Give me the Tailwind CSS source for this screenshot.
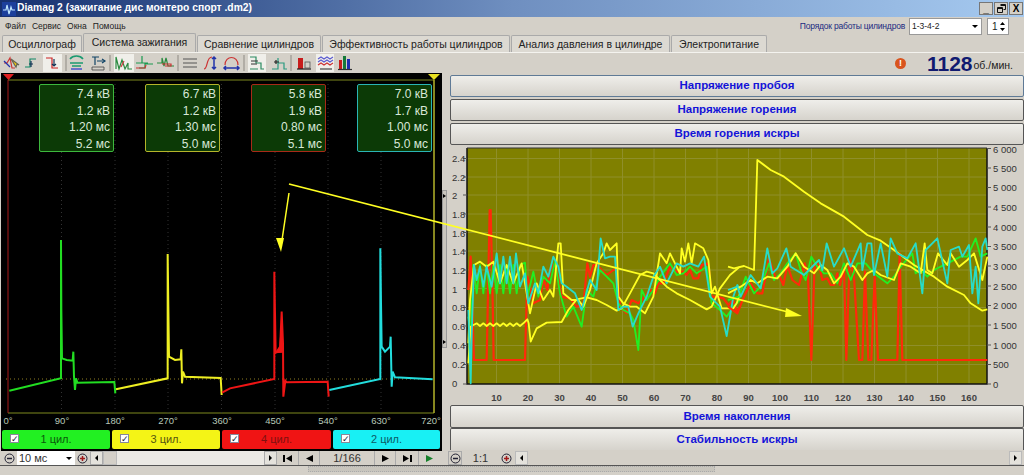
<!DOCTYPE html>
<html lang="ru">
<head>
    <meta charset="UTF-8" />
    <title>Diamag 2</title>
    <script src="https://cdn.jsdelivr.net/npm/@tailwindcss/browser@4"></script>
</head>
<body class="bg-[#d4d0c8] font-['Liberation_Sans',sans-serif] text-black">
<div class="relative w-[1024px] h-[475px] overflow-hidden flex flex-col">

    <!-- title bar -->
    <div class="h-[17px] flex items-center bg-gradient-to-r from-[#17306f] via-[#6f8fc0] to-[#a6caf0] pl-[2px] pr-[1px]">
        <svg width="14" height="14" viewBox="0 0 14 14" class="mr-[1px]"><rect width="14" height="14" fill="#1c3f9c"/><path d="M1 8h3l1-5 2 9 2-7 1 3h3" fill="none" stroke="#bfe6ff" stroke-width="1.2"/></svg>
        <span class="text-white font-bold text-[10.3px] leading-none">Diamag 2 (зажигание дис монтеро спорт .dm2)</span>
        <div class="ml-auto flex gap-[1px]">
            <div class="w-[14px] h-[13px] bg-[#d4d0c8] border border-[#777] text-[10px] font-bold leading-[11px] text-center">_</div>
            <div class="w-[14px] h-[13px] bg-[#d4d0c8] border border-[#777] flex items-center justify-center"><svg width="9" height="9" viewBox="0 0 9 9" fill="none" stroke="#111"><path d="M3.500.5h5v5h-2M3.500 1.500h5"/><path d="M.5 3.500h5v5h-5zM.5 4.500h5"/></svg></div>
            <div class="w-[14px] h-[13px] bg-[#d4d0c8] border border-[#777] text-[10px] font-bold leading-[11px] text-center">X</div>
        </div>
    </div>

    <!-- menu -->
    <div class="h-[18px] flex items-center pl-[5px] text-[8.5px] gap-[6px] text-[#222]">
        <span>Файл</span><span>Сервис</span><span>Окна</span><span>Помощь</span>
        <div class="ml-auto flex items-center pr-[15px]">
            <span class="text-[#1a2a80] text-[8.5px] mr-[4px] tracking-[-0.2px]">Порядок работы цилиндров</span>
            <div class="w-[73px] h-[17px] bg-white border border-[#999] flex items-center pl-[2px] text-[8.5px]">1-3-4-2<span class="ml-auto mr-[3px] w-0 h-0 border-x-[3px] border-x-transparent border-t-[3px] border-t-black"></span></div>
            <div class="ml-[5px] w-[22px] h-[17px] bg-white border border-[#999] flex items-center pl-[4px] text-[10px]">1<svg width="7" height="11" viewBox="0 0 7 11" class="ml-auto mr-[2px]"><path d="M3.5 1 6 4H1zM3.5 10 1 7h5z"/></svg></div>
        </div>
    </div>

    <!-- tabs -->
    <div class="h-[18px] flex items-end pl-[2px] gap-[1px] text-[10.5px] text-[#222] border-b border-[#f4f3ef] whitespace-nowrap">
        <div class="w-[80px] h-[17px] bg-[#dcd9d2] border border-b-0 border-[#aaa] rounded-t-[2px] text-center leading-[16px]">Осциллограф</div>
        <div class="w-[113px] h-[19px] bg-[#d4d0c8] border border-b-0 border-[#aaa] rounded-t-[2px] text-center leading-[17px]">Система зажигания</div>
        <div class="w-[124px] h-[17px] bg-[#dcd9d2] border border-b-0 border-[#aaa] rounded-t-[2px] text-center leading-[16px]">Сравнение цилиндров</div>
        <div class="w-[188px] h-[17px] bg-[#dcd9d2] border border-b-0 border-[#aaa] rounded-t-[2px] text-center leading-[16px]">Эффективность работы цилиндров</div>
        <div class="w-[159px] h-[17px] bg-[#dcd9d2] border border-b-0 border-[#aaa] rounded-t-[2px] text-center leading-[16px]">Анализ давления в цилиндре</div>
        <div class="w-[96px] h-[17px] bg-[#dcd9d2] border border-b-0 border-[#aaa] rounded-t-[2px] text-center leading-[16px]">Электропитание</div>
    </div>

    <!-- toolbar -->
    <div class="relative h-[20px] flex items-center">
        <svg width="360" height="20" viewBox="0 0 360 20" fill="none" stroke-width="1.2">
            <g fill="#f0efea" stroke="none"><rect x="43" y="1" width="19" height="18"/><rect x="114" y="1" width="20" height="18"/><rect x="248" y="1" width="18" height="18"/><rect x="316" y="1" width="18" height="18"/></g>
            <g stroke="#9a978f"><path d="M66 2v16M110 2v16M178 2v16M244 2v16M291 2v16"/></g>
            <path d="M4 10h3l3-5 2 10h3" stroke="#c33"/><path d="M11 6l5 8 1-3 2 1z" fill="#ffd400" stroke="#665"/><path d="M4 8l6 6" stroke="#23a"/>
            <path d="M25 14h5V6h6" stroke="#186"/><path d="M31 8v6M29 11h4" stroke="#135"/>
            <path d="M46 5h6v10h6" stroke="#c22"/><path d="M54 6v7M52 11l2 2 2-2" stroke="#135"/>
            <path d="M70 6c3-4 10-4 13 0M70 10h13M72 13h9" stroke="#1a9a70" stroke-width="1.6"/><path d="M71 16h11" stroke="#23c"/>
            <path d="M92 4h7M95 4v8M97 8h8" stroke="#146"/><path d="M102 6l3 2-3 2" stroke="#146"/><path d="M92 14h12v3H92z" stroke="#444" stroke-width=".8"/>
            <path d="M116 16V4l3 12 3-9 3 9 3-6v6h4" stroke="#2a8a40"/><path d="M121 14l3-6" stroke="#c44"/>
            <path d="M136 10h6V3v7h6M139 15h6v-4h8" stroke="#1a9a50"/><path d="M136 15h9l1-3" stroke="#c33"/>
            <path d="M157 10h5V5l2 8 2-8 2 8h6" stroke="#2a8a40"/><path d="M162 11h9v2h-6" stroke="#c33"/>
            <path d="M183 6h14M183 10h14M183 14h14" stroke="#555" stroke-width="1"/>
            <path d="M204 16c4 0 2-12 8-12" stroke="#c33"/><path d="M214 4v12M212 6l2-2 2 2M212 14l2 2 2-2" stroke="#23a" stroke-width="1.5"/>
            <path d="M225 12c0-10 13-10 13 0" stroke="#c33"/><path d="M224 15h15M226 13l-2 2 2 2M237 13l2 2-2 2" stroke="#23a" stroke-width="1.5"/>
            <path d="M250 4h6v6h5v6h3M250 16h8" stroke="#2a8a60"/><path d="M251 8h7M251 11h6" stroke="#333"/>
            <path d="M272 16h6V5M278 10h6v6h3" stroke="#2a9a80"/><path d="M274 9h5M276 7v4" stroke="#222"/>
            <rect x="298" y="5" width="5" height="11" fill="#c71c1c" stroke="none"/><path d="M297 16h14" stroke="#222"/><rect x="305" y="9" width="5" height="6" stroke="#555" stroke-width=".8"/>
            <path d="M318 6l3-2 3 2 3-2 3 2 3-2M318 9l3-2 3 2 3-2 3 2 3-2" stroke="#5a5ad0"/><path d="M318 12l3-2 3 2 3-2 3 2 3-2" stroke="#c33"/><path d="M320 16h12" stroke="#444"/>
            <rect x="339" y="7" width="3" height="9" fill="#c71c1c" stroke="none"/><rect x="343" y="3" width="3" height="13" fill="#157a3a" stroke="none"/><rect x="347" y="6" width="3" height="10" fill="#1c2fb0" stroke="none"/><path d="M338 16.500h14" stroke="#333"/>
        </svg>
        <div class="ml-auto flex items-center pr-[11px]">
            <div class="w-[11px] h-[11px] rounded-full bg-[#d9541e] text-white text-[9px] font-bold leading-[11px] text-center">!</div>
            <span class="ml-[21px] text-[#101a70] text-[21px] font-bold leading-none">1128</span>
            <span class="ml-[1px] text-[10.5px] text-[#222] mt-[5px]">об./мин.</span>
        </div>
    </div>

    <!-- main -->
    <div class="h-[378px] flex">
        <!-- scope -->
        <div class="w-[441px] ml-[1px] bg-black flex flex-col shrink-0">
            <div class="relative h-[356px]">
                <svg class="absolute inset-0" width="440" height="356" viewBox="1 73 440 356" fill="none">
                    <path d="M8 80H434M8 413H434" stroke="#7f8a1e" stroke-width="1"/>
                    <path d="M8 80V413" stroke="#a81818" stroke-width="1"/>
                    <path d="M434 80V413" stroke="#b5b52a" stroke-width="1.500"/>
                    <path d="M61.500 84V413M115 84V413M168 84V413M221.500 84V413M275 84V413M328 84V413M381 84V413" stroke="#333" stroke-width="1" stroke-dasharray="1 3"/>
                    <path d="M6 379H434" stroke="#8f7f20" stroke-width="1" stroke-dasharray="1 3"/>
                    <path d="M3 74h11l-5.500 6z" fill="#e02020"/><path d="M428 74h12l-6 6z" fill="#e8e020"/>
                    <g transform="translate(0 230) scale(.33333)">
                        <polyline stroke="#22dd22" stroke-width="6" points="28,482 183,445 183,30 184,240 186,385 200,390 218,392 220,365 222,440 225,480 228,445 232,458 343,456 346,490"/>
                        <polyline stroke="#eeee22" stroke-width="6" points="348,478 503,445 503,72 505,230 507,380 525,390 542,388 544,358 546,460 549,425 555,440 662,444 665,495"/>
                    </g>
                    <g transform="translate(230 170) scale(.33333)">
                        <polyline stroke="#ee1515" stroke-width="6" points="-24,668 0,655 133,627 133,305 135,430 137,548 150,540 155,425 159,520 160,680 166,632 170,637 293,635 296,680"/>
                        <polygon fill="#ee1515" points="134,550 148,528 155,430 160,548"/>
                        <polyline stroke="#22dddd" stroke-width="6" points="298,660 451,627 451,235 453,400 455,530 465,545 480,530 482,500 485,650 488,605 495,622 608,628"/>
                    </g>
                    <g font-size="9.500" fill="#b8c8b8" text-anchor="middle" stroke="none">
                        <text x="8" y="424">0°</text><text x="62" y="424">90°</text><text x="115" y="424">180°</text><text x="168" y="424">270°</text><text x="222" y="424">360°</text><text x="275" y="424">450°</text><text x="328" y="424">540°</text><text x="381" y="424">630°</text><text x="431" y="424">720°</text>
                    </g>
                </svg>
                <div class="relative pt-[11px] pl-[38px] flex gap-[31px] text-[#d8e8d8] text-[12px] leading-[16.500px] text-right">
                    <div class="w-[75px] h-[68px] bg-[#0c3a06] border border-[#3db83d] rounded-[2px] pr-[3px] pt-[1px]"><p>7.4 кВ</p><p>1.2 кВ</p><p>1.20 мс</p><p>5.2 мс</p></div>
                    <div class="w-[75px] h-[68px] bg-[#0c3a06] border border-[#b5b52a] rounded-[2px] pr-[3px] pt-[1px]"><p>6.7 кВ</p><p>1.2 кВ</p><p>1.30 мс</p><p>5.0 мс</p></div>
                    <div class="w-[75px] h-[68px] bg-[#0c3a06] border border-[#a82a18] rounded-[2px] pr-[3px] pt-[1px]"><p>5.8 кВ</p><p>1.9 кВ</p><p>0.80 мс</p><p>5.1 мс</p></div>
                    <div class="w-[75px] h-[68px] bg-[#0c3a06] border border-[#2ab5b5] rounded-[2px] pr-[3px] pt-[1px]"><p>7.0 кВ</p><p>1.7 кВ</p><p>1.00 мс</p><p>5.0 мс</p></div>
                </div>
            </div>
            <!-- legend -->
            <div class="h-[22px] flex gap-[2px] pl-[1px] pr-[1px] pt-[1px] text-[11px] text-center leading-[19px]">
                <div class="relative w-[108px] h-[19px] bg-[#22f022] rounded-[2px] text-[#0a5a0a]"><span class="absolute left-[8px] top-[4px] w-[9px] h-[9px] bg-white border border-[#889] text-[#123] text-[9px] leading-[8px]">✓</span>1 цил.</div>
                <div class="relative w-[108px] h-[19px] bg-[#f4f416] rounded-[2px] text-[#555510]"><span class="absolute left-[8px] top-[4px] w-[9px] h-[9px] bg-white border border-[#889] text-[#123] text-[9px] leading-[8px]">✓</span>3 цил.</div>
                <div class="relative w-[109px] h-[19px] bg-[#f01414] rounded-[2px] text-[#801010]"><span class="absolute left-[8px] top-[4px] w-[9px] h-[9px] bg-white border border-[#889] text-[#123] text-[9px] leading-[8px]">✓</span>4 цил.</div>
                <div class="relative w-[107px] h-[19px] bg-[#18f0f4] rounded-[2px] text-[#0c5a66]"><span class="absolute left-[8px] top-[4px] w-[9px] h-[9px] bg-white border border-[#889] text-[#123] text-[9px] leading-[8px]">✓</span>2 цил.</div>
            </div>
        </div>

        <!-- splitter -->
        <div class="w-[8px] shrink-0 pt-[117px]">
            <div class="w-[5px] h-[158px] bg-[#c8c5bd] border border-[#999] flex flex-col justify-between items-center py-[3px]">
                <span class="w-0 h-0 border-y-[2px] border-y-transparent border-l-[3px] border-l-black"></span>
                <span class="w-0 h-0 border-y-[2px] border-y-transparent border-l-[3px] border-l-black"></span>
            </div>
        </div>

        <!-- right column -->
        <div class="w-[574px] flex flex-col">
            <div class="h-[2px]"></div>
            <button class="h-[22px] mb-[2px] border border-[#5f7a96] rounded-[2px] bg-gradient-to-b from-[#efeeea] to-[#d6d3cc] text-[#1414d8] font-bold text-[11.500px]">Напряжение пробоя</button>
            <button class="h-[22px] mb-[2px] border border-[#555] rounded-[2px] bg-gradient-to-b from-[#efeeea] to-[#d6d3cc] text-[#1414d8] font-bold text-[11.500px]">Напряжение горения</button>
            <button class="h-[22px] border border-[#555] rounded-[2px] bg-gradient-to-b from-[#efeeea] to-[#d6d3cc] text-[#1414d8] font-bold text-[11.500px]">Время горения искры</button>
            <svg width="574" height="262" viewBox="450 143 574 262" fill="none" class="shrink-0 -mt-[2px]">
                <rect x="467" y="148" width="520" height="236" fill="#808000"/>
                <path d="M496.500 148V384M528 148V384M559.500 148V384M591 148V384M622.500 148V384M654 148V384M685.500 148V384M717 148V384M748.500 148V384M780 148V384M811.500 148V384M843 148V384M874.500 148V384M906 148V384M937.500 148V384M969 148V384" stroke="#8f8f2a" stroke-width="1"/>
                <path d="M467 364.500H987M467 345.500H987M467 326H987M467 307.500H987M467 288.500H987M467 270H987M467 251H987M467 232.500H987M467 214H987M467 195H987M467 177H987M467 158.500H987" stroke="#8f8f2a" stroke-width="1"/>
                <path d="M467 148V384H987V148" stroke="#111" stroke-width="1.500"/><path d="M467 148H987" stroke="#333" stroke-width="1"/>
                <g transform="translate(450 150) scale(.33333)" stroke-width="5.500" stroke-linejoin="round">
                    <polyline stroke="#ff2a0a" stroke-width="6.500" points="55,420 62,320 72,630 110,630 113,480 119,180 122,180 128,450 131,630 225,630 232,380 238,400 250,460 270,450 280,385 292,420 300,360 315,340 335,440 360,445 380,470 400,465 412,340 420,380 430,345 440,345 450,355 470,375 490,360 500,360 510,470 530,490 545,450 565,460 580,445 600,420 615,430 625,400 640,400 660,350 680,365 700,365 710,375 720,360 730,385 745,385 755,345 775,340 785,440 800,440 820,445 835,465 850,450 860,485 870,470"/>
                    <polyline stroke="#22ee22" points="55,500 62,560 70,345 80,430 90,345 100,430 110,345 120,430 130,345 140,430 150,345 160,430 170,345 180,430 190,345 200,430 210,345 225,338 232,440 250,365 265,440 280,380 300,400 315,335 330,430 350,500 370,470 395,530 410,420 430,440 450,360 470,380 490,400 505,460 520,480 540,490 550,510 565,600 575,420 590,450 610,420 630,380 660,340 680,375 700,370 720,350 740,370 770,350 785,460 810,480 830,500 850,470 870,450"/>
                    <polyline stroke="#ffff22" points="55,580 60,450 72,345 90,335 110,350 130,335 150,400 170,345 190,400 215,340 225,400 240,490 260,400 280,450 300,420 310,440 325,280 332,280 340,430 365,450 385,450 400,470 420,420 440,340 460,310 470,280 480,300 500,280 505,440 520,460 540,470 560,470 585,490 610,440 630,310 650,340 660,310 690,370 695,295 705,335 715,280 725,340 735,280 760,295 775,330 785,430 795,410 815,475 850,475 860,460 870,430"/>
                    <polyline stroke="#ffff22" points="55,640 62,530 70,525 80,520 90,528 100,520 110,528 120,520 130,528 140,520 150,528 160,520 170,528 180,520 190,528 200,520 210,528 220,520 232,508 236,520 242,575 260,535 290,518 335,516 355,480 380,448 410,442 440,450 470,465 500,482 515,475 540,430 570,375 590,365 610,370 650,410 680,430 720,450 770,478 785,470 810,415 840,375 870,350"/>
                    <polyline stroke="#28dcc8" points="55,480 62,700 65,560 72,345 80,390 90,350 100,410 110,350 125,410 140,310 150,400 160,320 170,400 180,320 190,400 198,310 210,410 225,370 235,460 255,400 265,430 280,350 295,380 310,320 325,350 335,400 350,410 375,430 395,480 420,390 440,420 452,265 465,325 480,320 495,320 505,480 520,470 535,470 548,530 565,490 590,440 610,380 630,350 650,400 680,340 700,350 720,340 745,350 762,320 780,440 810,470 830,558 850,440 862,405 870,420"/>
                </g>
                <g transform="translate(734 150) scale(.33333)" stroke-width="5.500" stroke-linejoin="round">
                    <polyline stroke="#ff2a0a" stroke-width="6.500" points="-18,470 10,490 30,440 50,400 70,430 85,430 105,325 125,385 135,375 148,405 160,345 175,390 195,405 212,340 222,380 232,630 242,340 255,345 265,390 280,385 290,405 300,405 310,370 318,405 330,350 337,630 347,325 360,380 375,630 385,630 393,365 403,630 412,630 422,380 432,630 490,630 497,310 505,630 760,630"/>
                    <polyline stroke="#22ee22" points="-18,450 15,440 35,380 60,430 80,410 105,340 120,390 140,370 160,340 185,310 200,360 215,390 232,320 250,350 270,370 290,370 310,400 330,340 350,390 370,340 395,340 420,370 460,400 480,380 500,350 535,310 545,370 560,360 580,380 600,360 620,350 640,340 680,320 700,320 725,265 740,320 760,310"/>
                    <polyline stroke="#ffff22" points="-18,430 20,410 50,390 70,400 100,380 130,385 160,350 185,310 210,350 240,370 260,345 280,360 300,400 320,380 340,340 360,350 385,390 400,370 420,360 440,375 480,390 500,340 530,350 560,370 572,280 580,360 595,370 612,310 640,345 650,310 675,350 700,330 720,310 745,390 760,320"/>
                    <polyline stroke="#ffff22" points="-18,350 0,355 30,348 60,360 65,200 70,30 110,60 150,80 210,125 260,160 330,200 400,255 440,272 480,300 540,345 600,380 640,410 690,435 710,460 745,482 760,478"/>
                    <polyline stroke="#28dcc8" points="-18,420 10,410 20,440 50,375 80,415 100,295 115,370 130,355 157,295 170,350 210,375 255,330 265,360 278,280 300,350 330,295 350,350 380,280 385,360 400,280 412,280 420,375 440,280 460,380 470,265 490,310 520,325 545,280 565,430 575,300 610,265 640,400 650,300 675,290 685,320 705,285 715,430 725,350 733,460 745,290 755,265 760,300"/>
                </g>
                <path d="M463 158.500h4M463 177h4M463 195h4M463 214h4M463 232.500h4M463 251h4M463 270h4M463 288.500h4M463 307.500h4M463 326h4M463 345.500h4M463 364.500h4M463 384h4" stroke="#555" stroke-width="1"/>
                <path d="M987 148.500h4M987 168h4M987 187.500h4M987 207h4M987 227h4M987 246.500h4M987 266h4M987 286h4M987 305.500h4M987 325h4M987 345h4M987 364.500h4M987 384h4" stroke="#555" stroke-width="1"/>
                <g font-size="9.500" fill="#333" stroke="none">
                    <text x="452" y="162">2.4</text><text x="452" y="181">2.2</text><text x="452" y="199">2</text><text x="452" y="218">1.8</text><text x="452" y="237">1.6</text><text x="452" y="255">1.4</text><text x="452" y="274">1.2</text><text x="452" y="293">1</text><text x="452" y="311">0.8</text><text x="452" y="330">0.6</text><text x="452" y="349">0.4</text><text x="452" y="368">0.2</text><text x="452" y="387">0</text>
                    <text x="993" y="153">6 000</text><text x="993" y="172">5 500</text><text x="993" y="191">5 000</text><text x="993" y="211">4 500</text><text x="993" y="231">4 000</text><text x="993" y="250">3 500</text><text x="993" y="270">3 000</text><text x="993" y="290">2 500</text><text x="993" y="309">2 000</text><text x="993" y="329">1 500</text><text x="993" y="349">1 000</text><text x="993" y="368">500</text><text x="993" y="388">0</text>
                </g>
                <g font-size="9.500" font-weight="700" fill="#444" text-anchor="middle" stroke="none">
                    <text x="496.500" y="401">10</text><text x="528" y="401">20</text><text x="559.500" y="401">30</text><text x="591" y="401">40</text><text x="622.500" y="401">50</text><text x="654" y="401">60</text><text x="685.500" y="401">70</text><text x="717" y="401">80</text><text x="748.500" y="401">90</text><text x="780" y="401">100</text><text x="811.500" y="401">110</text><text x="843" y="401">120</text><text x="874.500" y="401">130</text><text x="906" y="401">140</text><text x="937.500" y="401">150</text><text x="969" y="401">160</text>
                </g>
            </svg>
            <button class="h-[23px] border border-[#555] rounded-[2px] bg-gradient-to-b from-[#efeeea] to-[#d6d3cc] text-[#1414d8] font-bold text-[11.500px]">Время накопления</button>
            <button class="h-[22px] border border-[#555] border-b-0 rounded-t-[2px] bg-gradient-to-b from-[#efeeea] to-[#d6d3cc] text-[#1414d8] font-bold text-[11.500px]">Стабильность искры</button>
        </div>
    </div>

    <!-- bottom controls -->
    <div class="h-[15px] flex items-stretch text-[11px] text-[#333] border-b border-[#555]">
        <div class="w-[441px] ml-[2px] flex shrink-0 items-stretch">
            <div class="w-[15px] flex items-center justify-center"><svg width="11" height="11" viewBox="0 0 11 11" fill="none" stroke="#223"><circle cx="5.500" cy="5.500" r="4.500"/><path d="M3 5.500h5" stroke-width="1.500"/></svg></div>
            <div class="w-[58px] bg-white flex items-center pl-[2px]">10 мс<span class="ml-auto mr-[3px] w-0 h-0 border-x-[3px] border-x-transparent border-t-[3px] border-t-black"></span></div>
            <div class="w-[14px] flex items-center justify-center"><svg width="11" height="11" viewBox="0 0 11 11" fill="none" stroke="#223"><circle cx="5.500" cy="5.500" r="4.500"/><path d="M3 5.500h5M5.500 3v5" stroke="#a01818" stroke-width="1.500"/></svg></div>
            <div class="w-[13px] ml-[1px] bg-[#e4e2dc] border border-[#aaa] flex items-center justify-center"><span class="w-0 h-0 border-y-[3px] border-y-transparent border-r-[3px] border-r-black"></span></div>
            <div class="w-[14px] bg-[#d4d0c8] border border-[#bbb]"></div>
            <div class="w-[147px] bg-[#ebe9e4]"></div>
            <div class="w-[13px] bg-[#e4e2dc] border border-[#aaa] flex items-center justify-center"><span class="w-0 h-0 border-y-[3px] border-y-transparent border-l-[3px] border-l-black"></span></div>
            <div class="w-[21px] flex items-center justify-center"><svg width="9" height="7" viewBox="0 0 9 7"><path d="M0 0h2v7H0zM9 0v7L3 3.500z"/></svg></div>
            <div class="w-[22px] flex items-center justify-center border-x border-[#aaa]"><svg width="7" height="7" viewBox="0 0 7 7"><path d="M7 0v7L0 3.500z"/></svg></div>
            <div class="w-[54px] text-center leading-[15px]">1/166</div>
            <div class="w-[22px] flex items-center justify-center border-x border-[#aaa]"><svg width="7" height="7" viewBox="0 0 7 7"><path d="M0 0v7l7-3.500z"/></svg></div>
            <div class="w-[22px] flex items-center justify-center"><svg width="9" height="7" viewBox="0 0 9 7"><path d="M7 0h2v7H7zM0 0v7l6-3.500z"/></svg></div>
            <div class="w-[22px] flex items-center justify-center border-l border-[#aaa]"><svg width="7" height="7" viewBox="0 0 7 7"><path fill="#15802a" d="M0 0v7l7-3.500z"/></svg></div>
        </div>
        <div class="ml-[5px] flex-1 flex items-stretch">
            <div class="w-[14px] flex items-center justify-center border border-[#aaa]"><svg width="11" height="11" viewBox="0 0 11 11" fill="none" stroke="#223"><circle cx="5.500" cy="5.500" r="4.500"/><path d="M3 5.500h5" stroke-width="1.500"/></svg></div>
            <div class="w-[37px] text-center leading-[15px]">1:1</div>
            <div class="w-[14px] flex items-center justify-center"><svg width="11" height="11" viewBox="0 0 11 11" fill="none" stroke="#223"><circle cx="5.500" cy="5.500" r="4.500"/><path d="M3 5.500h5M5.500 3v5" stroke="#a01818" stroke-width="1.500"/></svg></div>
            <div class="w-[13px] ml-[2px] flex items-center justify-center bg-[#e4e2dc] border border-[#bbb]"><span class="w-0 h-0 border-y-[3px] border-y-transparent border-r-[3px] border-r-black"></span></div>
            <div class="flex-1 bg-[#d4d0c8]"></div>
            <div class="w-[13px] mr-[2px] flex items-center justify-center bg-[#e4e2dc] border border-[#bbb]"><span class="w-0 h-0 border-y-[3px] border-y-transparent border-l-[3px] border-l-black"></span></div>
        </div>
    </div>

    <!-- bottom splitter -->
    <div class="h-[9px] pl-[308px]">
        <div class="w-[407px] h-[6px] bg-[#c8c5bd] border border-[#aaa] border-dotted"></div>
    </div>

    <!-- hand-drawn annotation arrows over the picture -->
    <svg class="absolute inset-0 pointer-events-none" width="1024" height="475" viewBox="0 0 1024 475" fill="none">
        <path d="M289 184 788 312" stroke="#ffff22" stroke-width="1.800"/>
        <path d="M802 316 786 308l-1 9z" fill="#ffff22"/>
        <path d="M289 193 282 240" stroke="#ffff22" stroke-width="1.500"/>
        <path d="M281 252 276 238h8z" fill="#ffff22"/>
    </svg>
</div>
</body>
</html>
